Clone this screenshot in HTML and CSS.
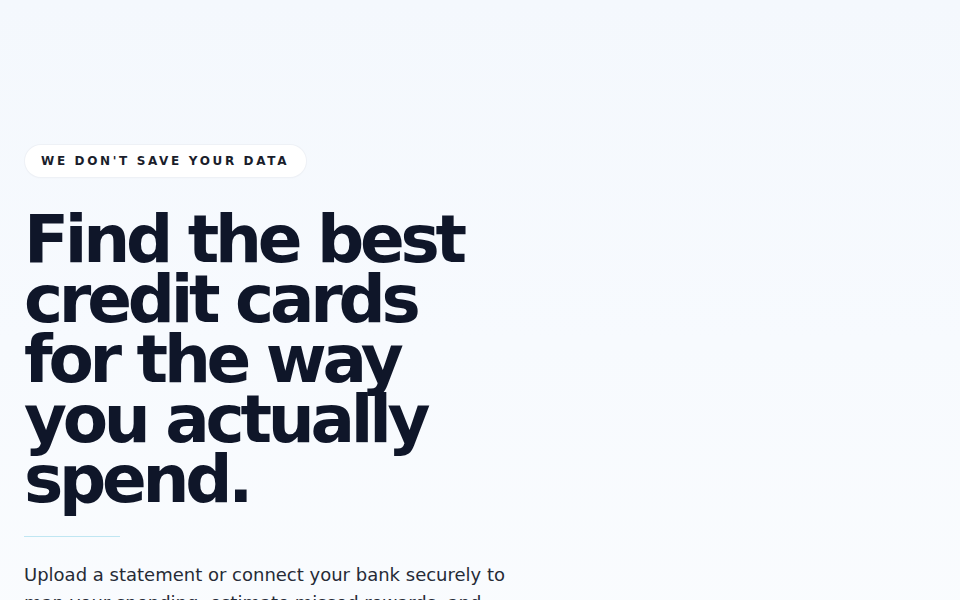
FILE: index.html
```html
<!DOCTYPE html>
<html lang="en">
<head>
<meta charset="utf-8">
<title>Find the best credit cards</title>
<link rel="stylesheet" href="styles.css">
</head>
<body>
<main class="hero">
  <section class="hero-copy">
    <div class="badge">WE DON'T SAVE YOUR DATA</div>
    <h1 class="title">Find the best credit cards for the way you actually spend.</h1>
    <div class="rule"></div>
    <p class="lead">Upload a statement or connect your bank securely to map your spending, estimate missed rewards, and see which cards fit you best.</p>
  </section>
</main>
</body>
</html>
```
FILE: styles.css
```css
html, body {
  margin: 0;
  padding: 0;
}
body {
  min-height: 100vh;
  background: linear-gradient(180deg, #f4f8fd 0%, #f7fafe 50%, #fafcfe 100%);
  font-family: "DejaVu Sans", sans-serif;
  color: #0f172a;
}
.hero {
  padding: 145px 24px 40px 25px;
}
.hero-copy {
  width: 500px;
  display: flex;
  flex-direction: column;
  align-items: flex-start;
}
.badge {
  background: #ffffff;
  border-radius: 999px;
  padding: 0 17px 0 16px;
  height: 32px;
  line-height: 32px;
  font-size: 12px;
  font-weight: 700;
  letter-spacing: 2.65px;
  color: #1a1d2b;
  box-shadow: 0 0 0 1px #eef1f6, 0 1px 2px rgba(15, 23, 42, 0.04);
}
.title {
  margin: 33px 0 0 -1px;
  font-size: 66px;
  line-height: 60px;
  font-weight: 700;
  letter-spacing: -4.25px;
  color: #0f1629;
  width: 480px;
}
.rule {
  width: 96px;
  height: 1px;
  background: #bfe6f2;
  margin: 26px 0 0 -1px;
}
.lead {
  margin: 24px 0 0 -1px;
  font-size: 18px;
  line-height: 28px;
  color: #262b36;
  width: 490px;
}
```
